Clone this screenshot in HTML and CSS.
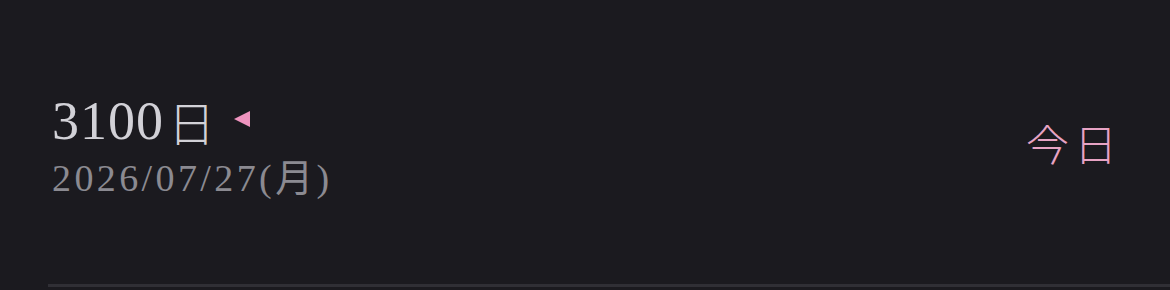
FILE: index.html
```html
<!DOCTYPE html>
<html lang="ja">
<head>
  <meta charset="UTF-8">
  <meta name="viewport" content="width=device-width, initial-scale=1">
  <title>日数</title>
  <link rel="stylesheet" href="styles.css">
</head>
<body>

  <div class="row">
    <div class="info">
      <div class="count">
        <span class="days">3100</span><span class="unit">日</span>
        <span class="marker"></span>
      </div>
      <div class="date">2026/07/27(月)</div>
    </div>
    <button class="today">今日</button>
  </div>
  <div class="divider"></div>

</body>
</html>
```

FILE: styles.css
```css
* {
  box-sizing: border-box;
}
body {
  margin: 0;
  padding: 0;
  height: 290px;
  background: #1b1a1f;
  font-family: 'Liberation Serif', 'Noto Sans CJK JP', serif;
  display: flex;
  flex-direction: column;
  overflow: hidden;
}
.row {
  height: 284px;
  display: flex;
  align-items: center;
  justify-content: space-between;
  padding: 0 48px 4px 52px;
}
.info {
  display: flex;
  flex-direction: column;
  padding-top: 9px;
}
.count {
  display: flex;
  align-items: center;
  color: #d2d1d7;
  height: 56px;
}
.days {
  font-size: 54px;
  line-height: 1;
  letter-spacing: 1px;
}
.unit {
  font-family: 'Noto Sans CJK JP', sans-serif;
  font-weight: 300;
  font-size: 47px;
  line-height: 1;
  margin-left: 4px;
}
.marker {
  width: 0;
  height: 0;
  border-top: 8px solid transparent;
  border-bottom: 8px solid transparent;
  border-right: 16px solid #ef94bf;
  margin-left: 19px;
  margin-bottom: 4px;
}
.date {
  color: #8b8a91;
  font-size: 38px;
  line-height: 1;
  letter-spacing: 3.4px;
  margin-top: 10px;
}
.today {
  background: none;
  border: none;
  padding: 0;
  color: #e7a3c4;
  font-family: 'Noto Sans CJK JP', sans-serif;
  font-weight: 300;
  font-size: 43px;
  letter-spacing: 5px;
  margin-top: 4px;
  cursor: pointer;
}
.divider {
  height: 3px;
  margin-left: 48px;
  background: #302f35;
}
```
